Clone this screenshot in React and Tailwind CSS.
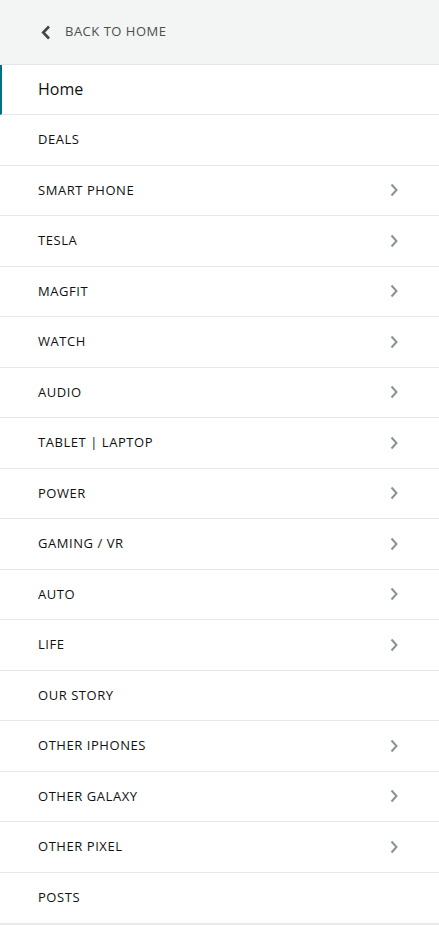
const ITEMS = [
  { label: "DEALS" },
  { label: "SMART PHONE", more: true },
  { label: "TESLA", more: true },
  { label: "MAGFIT", more: true },
  { label: "WATCH", more: true },
  { label: "AUDIO", more: true },
  { label: "TABLET | LAPTOP", more: true },
  { label: "POWER", more: true },
  { label: "GAMING / VR", more: true },
  { label: "AUTO", more: true },
  { label: "LIFE", more: true },
  { label: "OUR STORY" },
  { label: "OTHER IPHONES", more: true },
  { label: "OTHER GALAXY", more: true },
  { label: "OTHER PIXEL", more: true },
  { label: "POSTS" },
];

function Chevron({ dir = "right", className }) {
  const pts = dir === "right" ? "1.5,1.5 6.5,7 1.5,12.5" : "8,1.5 2.2,7.5 8,13.5";
  return (
    <svg width={dir === "right" ? 8 : 10} height={dir === "right" ? 14 : 15} viewBox={dir === "right" ? "0 0 8 14" : "0 0 10 15"}
      fill="none" stroke="currentColor" strokeWidth={dir === "right" ? 2 : 2.6} strokeLinecap="butt" strokeLinejoin="miter"
      className={className}>
      <polyline points={pts} />
    </svg>
  );
}

export default function App() {
  return (
    <div className="min-h-screen w-[439px] bg-[#e8eaea] font-['Open_Sans',sans-serif]">
      {/* Back header */}
      <div className="h-[65px] flex items-center pl-[41px] bg-[#f3f4f4] border-b border-[#e5e7e7]">
        <Chevron dir="left" className="text-[#3f4646]" />
        <span className="ml-[14px] text-[13px] tracking-[0.5px] text-[#495050]">BACK TO HOME</span>
      </div>

      <div className="bg-white">
        <div className="h-[50px] flex items-center border-l-2 border-[#007185] pl-[36px] border-b border-b-[#e7e9e9]">
          <span className="text-[16px] text-[#0f1111] -mt-[2px]">Home</span>
        </div>
        {ITEMS.map(item => (
          <div key={item.label}
            className="h-[50.5px] flex items-center justify-between pl-[38px] pr-[41px] border-b border-[#e7e9e9] last:border-b-0">
            <span className="text-[13px] tracking-[0.55px] text-[#0f1111]">{item.label}</span>
            {item.more && <Chevron className="text-[#879393]" />}
          </div>
        ))}
      </div>
    </div>
  );
}
